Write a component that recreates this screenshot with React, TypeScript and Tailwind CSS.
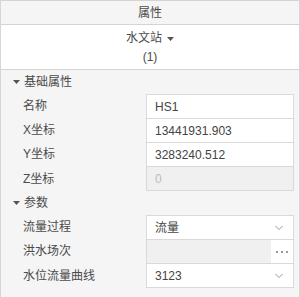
import React from 'react';

const FONT = { fontFamily: '"Liberation Sans", "Noto Sans CJK SC", sans-serif' };

const Caret = ({ className = '' }: { className?: string }) => (
  <svg width="7" height="4" viewBox="0 0 7 4" className={className}>
    <path d="M0 0 H7 L3.5 4 Z" fill="#555" />
  </svg>
);

const Chevron = () => (
  <svg width="8" height="5" viewBox="0 0 8 5" className="absolute right-[10px] top-1/2 -translate-y-1/2">
    <path d="M0.5 0.5 L4 4 L7.5 0.5" fill="none" stroke="#999" strokeWidth="1" />
  </svg>
);

const Dots = () => (
  <svg width="12" height="2" viewBox="0 0 12 2">
    <rect x="0" y="0" width="2" height="2" fill="#999" />
    <rect x="5" y="0" width="2" height="2" fill="#999" />
    <rect x="10" y="0" width="2" height="2" fill="#999" />
  </svg>
);

type Row = {
  label: string;
  value?: string;
  kind?: 'text' | 'disabled' | 'select' | 'more';
};

const BASIC: Row[] = [
  { label: '名称', value: 'HS1' },
  { label: 'X坐标', value: '13441931.903' },
  { label: 'Y坐标', value: '3283240.512' },
  { label: 'Z坐标', value: '0', kind: 'disabled' },
];

const PARAMS: Row[] = [
  { label: '流量过程', value: '流量', kind: 'select' },
  { label: '洪水场次', kind: 'more' },
  { label: '水位流量曲线', value: '3123', kind: 'select' },
];

const GroupHeader = ({ title }: { title: string }) => (
  <div className="h-[24px] flex items-center pl-[12px] shrink-0">
    <Caret className="mr-[4px]" />
    <span>{title}</span>
  </div>
);

const Rows = ({ rows }: { rows: Row[] }) => (
  <div className="flex flex-col shrink-0">
    {rows.map((r, i) => {
      const last = i === rows.length - 1;
      const grey = r.kind === 'disabled' || r.kind === 'more';
      return (
        <div key={r.label} className={`flex ${last ? 'h-[25px]' : 'h-[24px]'}`}>
          <div className="w-[145px] pl-[22px] flex items-center">{r.label}</div>
          <div
            className={`relative w-[148px] flex items-center pl-[8px] border-x border-t border-[#d9d9d9]
              ${last ? 'border-b' : ''}
              ${grey ? 'bg-[#f0f0f0]' : 'bg-white'}
              ${r.kind === 'disabled' ? 'text-[#bbb]' : 'text-[#444]'}`}
          >
            {r.value}
            {r.kind === 'select' && <Chevron />}
            {r.kind === 'more' && (
              <div className="absolute right-0 top-0 bottom-0 w-[22px] bg-white flex items-center justify-center">
                <Dots />
              </div>
            )}
          </div>
        </div>
      );
    })}
  </div>
);

export default function App() {
  return (
    <div
      className="w-[300px] h-[297px] bg-[#f5f5f5] border-x border-[#d6d6d6] flex flex-col text-[12px] text-[#4a4a4a] overflow-hidden"
      style={FONT}
    >
      <div className="h-[25px] shrink-0 border-y border-[#d4d4d4] flex items-center justify-center">
        属性
      </div>
      <div className="h-[45px] shrink-0 bg-white border-b border-[#d4d4d4] flex flex-col items-center pt-[4px] leading-[19px]">
        <div className="flex items-center">
          <span>水文站</span>
          <Caret className="ml-[5px]" />
        </div>
        <div>(1)</div>
      </div>
      <GroupHeader title="基础属性" />
      <Rows rows={BASIC} />
      <GroupHeader title="参数" />
      <Rows rows={PARAMS} />
    </div>
  );
}
